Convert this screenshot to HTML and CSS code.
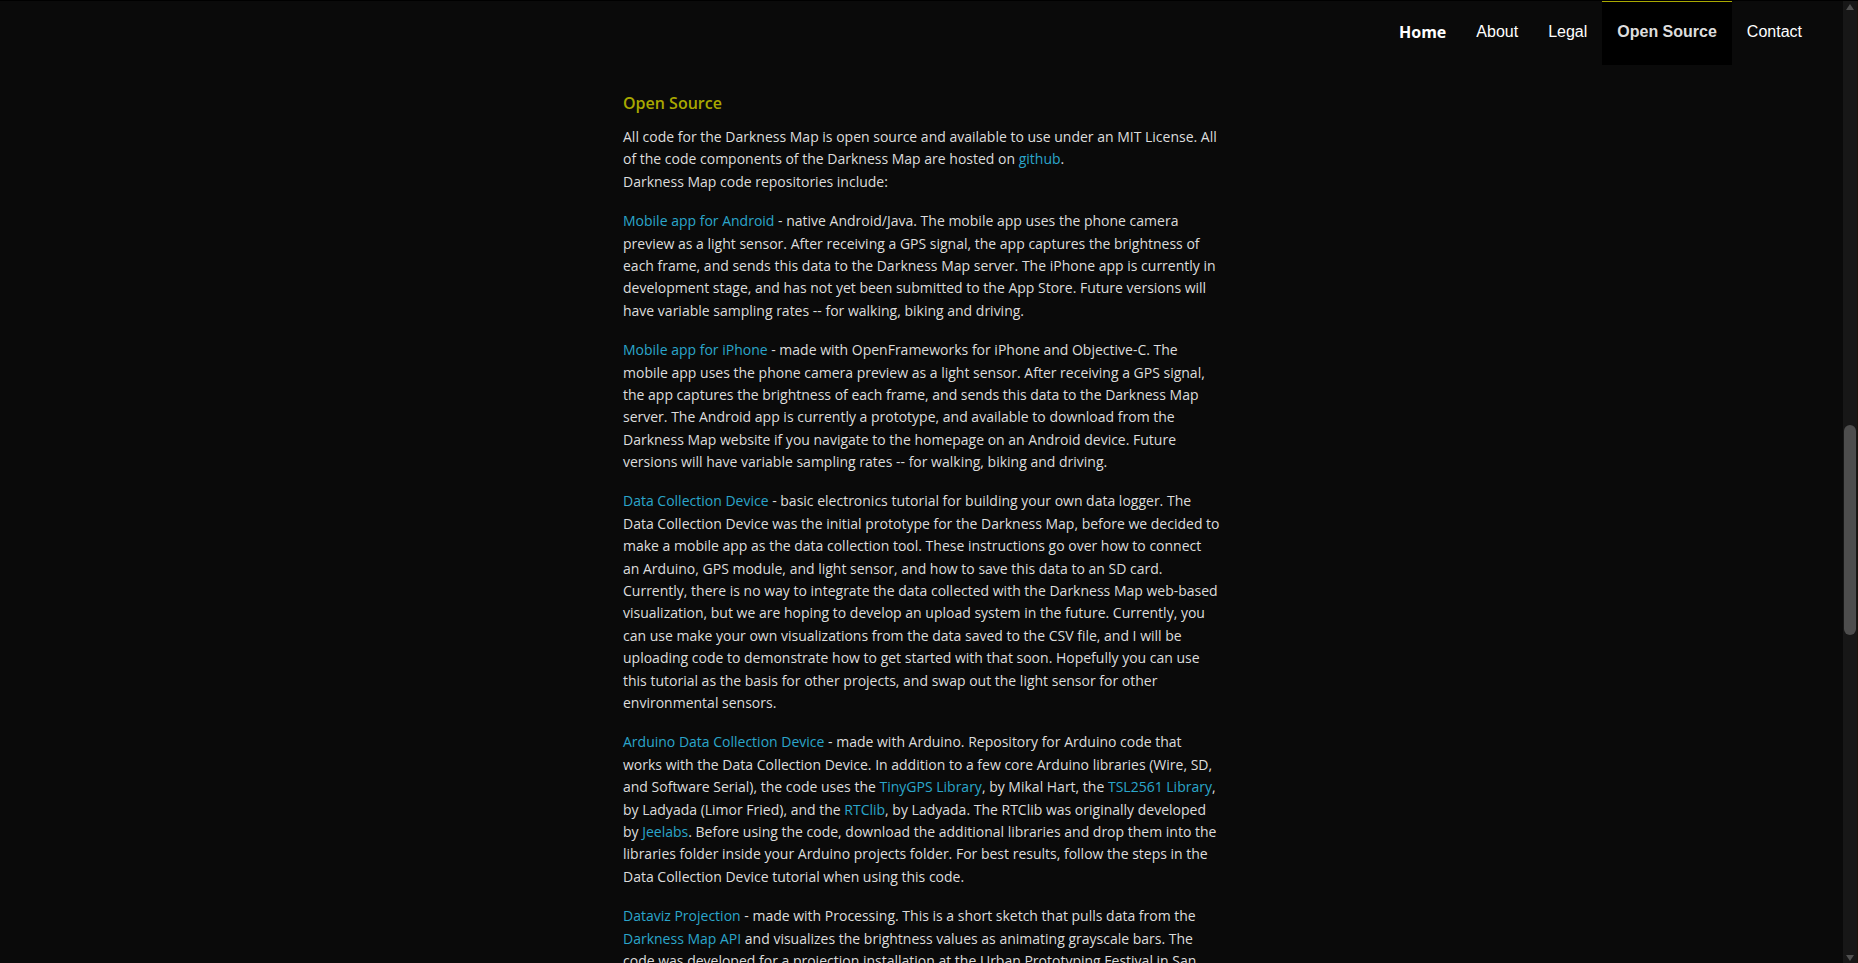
FILE: index.html
```html
<!DOCTYPE html>
<html lang="en">
<head>
<meta charset="utf-8">
<title>Darkness Map - Open Source</title>
<link rel="stylesheet" href="styles.css">
</head>
<body>
<div class="page">
  <header class="topbar">
    <nav class="nav">
      <a class="nav-link nav-home" href="#home">Home</a>
      <a class="nav-link" href="#about">About</a>
      <a class="nav-link" href="#legal">Legal</a>
      <a class="nav-link nav-active" href="#open-source">Open Source</a>
      <a class="nav-link" href="#contact">Contact</a>
    </nav>
  </header>
  <main class="content" id="open-source">
    <h1 class="title">Open Source</h1>
    <p>All code for the Darkness Map is open source and available to use under an MIT License. All of the code components of the Darkness Map are hosted on <a href="#github">github</a>.<br>Darkness Map code repositories include:</p>
    <p><a href="#android">Mobile app for Android</a> - native Android/Java. The mobile app uses the phone camera preview as a light sensor. After receiving a GPS signal, the app captures the brightness of each frame, and sends this data to the Darkness Map server. The iPhone app is currently in development stage, and has not yet been submitted to the App Store. Future versions will have variable sampling rates -- for walking, biking and driving.</p>
    <p><a href="#iphone">Mobile app for iPhone</a> - made with OpenFrameworks for iPhone and Objective-C. The mobile app uses the phone camera preview as a light sensor. After receiving a GPS signal, the app captures the brightness of each frame, and sends this data to the Darkness Map server. The Android app is currently a prototype, and available to download from the Darkness Map website if you navigate to the homepage on an Android device. Future versions will have variable sampling rates -- for walking, biking and driving.</p>
    <p><a href="#device">Data Collection Device</a> - basic electronics tutorial for building your own data logger. The Data Collection Device was the initial prototype for the Darkness Map, before we decided to make a mobile app as the data collection tool. These instructions go over how to connect an Arduino, GPS module, and light sensor, and how to save this data to an SD card. Currently, there is no way to integrate the data collected with the Darkness Map web-based visualization, but we are hoping to develop an upload system in the future. Currently, you can use make your own visualizations from the data saved to the CSV file, and I will be uploading code to demonstrate how to get started with that soon. Hopefully you can use this tutorial as the basis for other projects, and swap out the light sensor for other environmental sensors.</p>
    <p><a href="#arduino">Arduino Data Collection Device</a> - made with Arduino. Repository for Arduino code that works with the Data Collection Device. In addition to a few core Arduino libraries (Wire, SD, and Software Serial), the code uses the <a href="#tinygps">TinyGPS Library</a>, by Mikal Hart, the <a href="#tsl2561">TSL2561 Library</a>, by Ladyada (Limor Fried), and the <a href="#rtclib">RTClib</a>, by Ladyada. The RTClib was originally developed by <a href="#jeelabs">Jeelabs</a>. Before using the code, download the additional libraries and drop them into the libraries folder inside your Arduino projects folder. For best results, follow the steps in the Data Collection Device tutorial when using this code.</p>
    <p><a href="#dataviz">Dataviz Projection</a> - made with Processing. This is a short sketch that pulls data from the <a href="#api">Darkness Map API</a> and visualizes the brightness values as animating grayscale bars. The code was developed for a projection installation at the Urban Prototyping Festival in San</p>
  </main>
</div>
<div class="scrollbar" aria-hidden="true">
  <svg class="arrow" viewBox="0 0 8 6"><path d="M4 0L8 6H0Z"/></svg>
  <div class="track"><div class="thumb"></div></div>
  <svg class="arrow" viewBox="0 0 8 6"><path d="M0 0H8L4 6Z"/></svg>
</div>
</body>
</html>
```
FILE: styles.css
```css
* { box-sizing: border-box; }

body {
  margin: 0;
  height: 100vh;
  display: flex;
  overflow: hidden;
  background: #0a0a0a;
  border-top: 1px solid #000;
  color: #ddd;
  font: 14px/1.6 "Open Sans", sans-serif;
}

.page {
  flex: 1;
  min-width: 0;
  overflow: hidden;
}

.topbar {
  display: flex;
  justify-content: flex-end;
  padding-right: 26px;
}

.nav { display: flex; }

.nav-link {
  height: 64px;
  padding: 0 15px;
  border-top: 1px solid transparent;
  color: #fff;
  font: 16px/60px "Liberation Sans", Arial, sans-serif;
  text-decoration: none;
}

.nav-home {
  font-family: "Open Sans", sans-serif;
  font-weight: 700;
}

.nav-active {
  border-top-color: #a8a800;
  background: #000;
  color: #ddd;
  font-weight: 700;
}

.content {
  max-width: 597px;
  margin: 0 auto;
  padding-top: 25px;
}

.title {
  margin: 0 0 10px;
  color: #a8a800;
  font-size: 16px;
  font-weight: 600;
  line-height: 26px;
}

.content p { margin: 0 0 17px; }

.content a {
  color: #2ba6cb;
  text-decoration: none;
}

.scrollbar {
  width: 15px;
  display: flex;
  flex-direction: column;
  align-items: center;
  padding: 3px 1px 2px 0;
  background: #171717;
  border-right: 1px solid #1c120a;
}

.arrow {
  width: 8px;
  height: 6px;
  fill: #505050;
}

.track {
  flex: 1;
  width: 12px;
  padding: 415px 0 0;
}

.thumb {
  height: 210px;
  border-radius: 6px;
  background: #4d4d4d;
}
```
